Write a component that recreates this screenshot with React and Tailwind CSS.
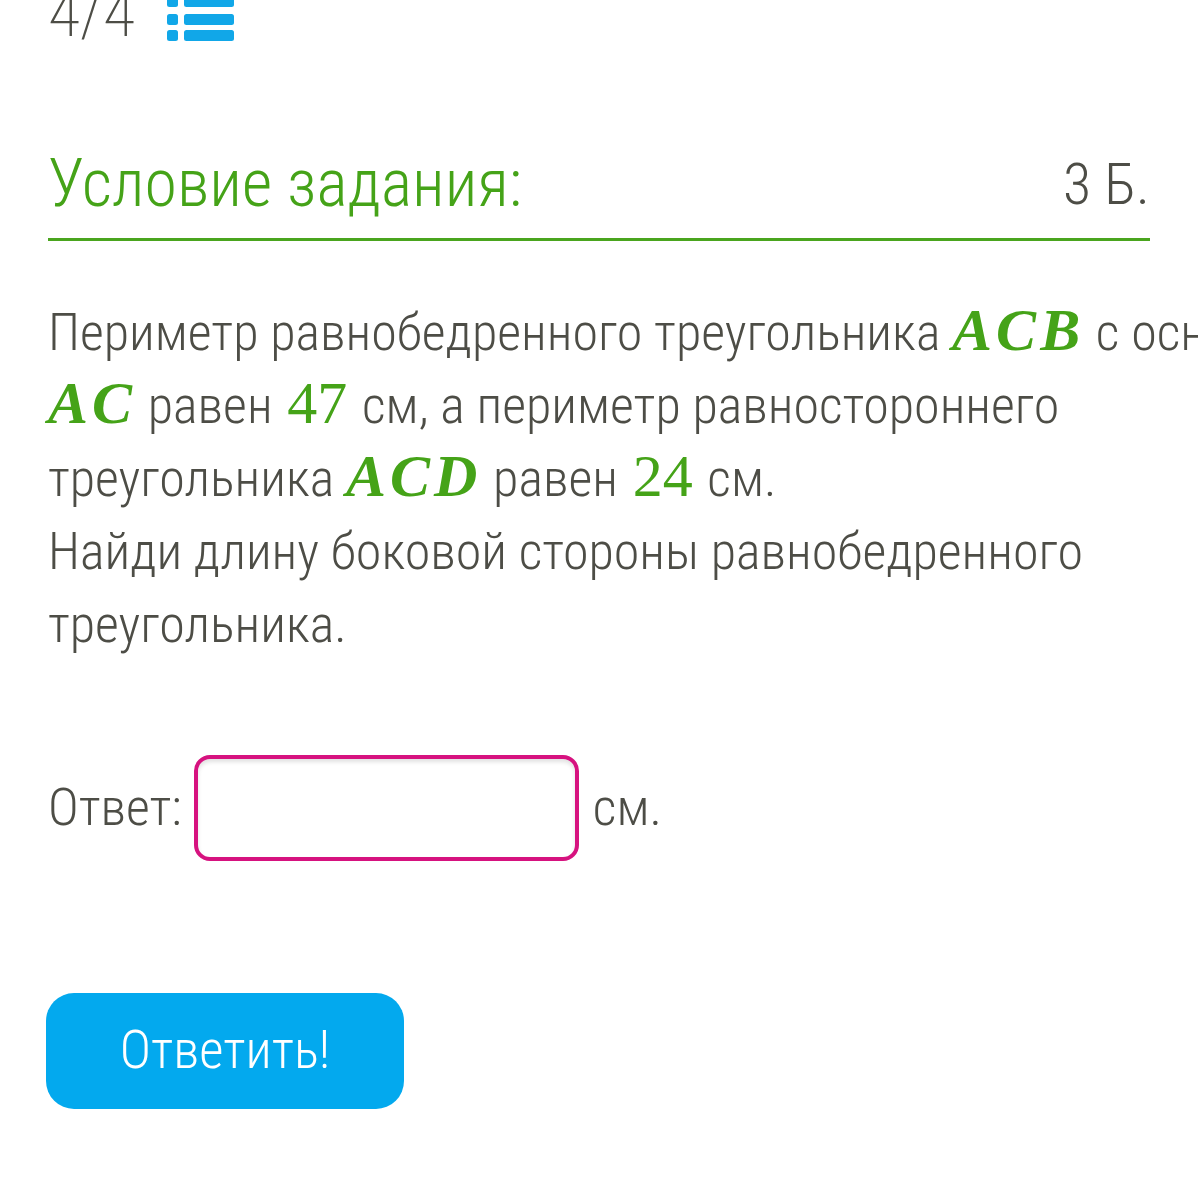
import React from 'react'

// Карточка задания: счётчик, условие, поле ответа и кнопка.
const body = "font-['Roboto_Condensed','Roboto',sans-serif] font-light font-stretch-condensed"

function M({ children }) {
  return <span className="font-['Liberation_Serif',serif] font-bold italic text-[60px] leading-none tracking-[4px] text-[#45a318]">{children}</span>
}
function N({ children }) {
  return <span className="mx-[3px] font-['Liberation_Serif',serif] text-[60px] leading-none text-[#45a318]">{children}</span>
}

function ListIcon() {
  return (
    <svg width="67" height="42" viewBox="0 0 67 42" className="fill-[#11a7e8]">
      <rect x="0" y="-4" width="11" height="11" rx="2.5" />
      <rect x="17" y="-4" width="50" height="11" rx="2.5" />
      <rect x="0" y="14" width="11" height="11" rx="2.5" />
      <rect x="17" y="14" width="50" height="11" rx="2.5" />
      <rect x="0" y="30" width="11" height="11" rx="2.5" />
      <rect x="17" y="30" width="50" height="11" rx="2.5" />
    </svg>
  )
}

export default function App() {
  return (
    <div className={`h-[1200px] w-[1198px] overflow-hidden bg-white text-[#4d4d46] ${body}`}>
      <div className="flex items-end gap-[32px] pl-[48px] -mt-[19px]">
        <span className="text-[66px] leading-[66px] font-extralight">4/4</span>
        <span className="mb-[5px]"><ListIcon /></span>
      </div>

      <div className="ml-[48px] mr-[48px] mt-[97px] flex items-end justify-between border-b-[3px] border-[#4aa51e] pb-[14px]">
        <span className="text-[66px] leading-[80px] text-[#45a318]">Условие задания:</span>
        <span className="text-[58px] leading-[80px]">3 Б.</span>
      </div>

      <div className="mt-[55px] pl-[48px] text-[52px] leading-[73px] whitespace-nowrap">
        <div>Периметр равнобедренного треугольника <M>ACB</M> с основанием</div>
        <div><M>AC</M> равен <N>47</N> см, а периметр равностороннего</div>
        <div>треугольника <M>ACD</M> равен <N>24</N> см.</div>
        <div>Найди длину боковой стороны равнобедренного</div>
        <div>треугольника.</div>
      </div>

      <div className="mt-[94px] flex items-center pl-[48px] text-[52px]">
        <span>Ответ:</span>
        <div className="ml-[12px] h-[106px] w-[385px] rounded-[16px] border-[4px] border-[#d6127f] bg-white shadow-[inset_0_3px_4px_rgba(0,0,0,0.12)]" />
        <span className="ml-[14px]">см.</span>
      </div>

      <button className="ml-[46px] mt-[132px] flex h-[116px] w-[358px] items-center justify-center rounded-[28px] bg-[#03a9ee] text-[53px] text-white">
        Ответить!
      </button>
    </div>
  )
}
